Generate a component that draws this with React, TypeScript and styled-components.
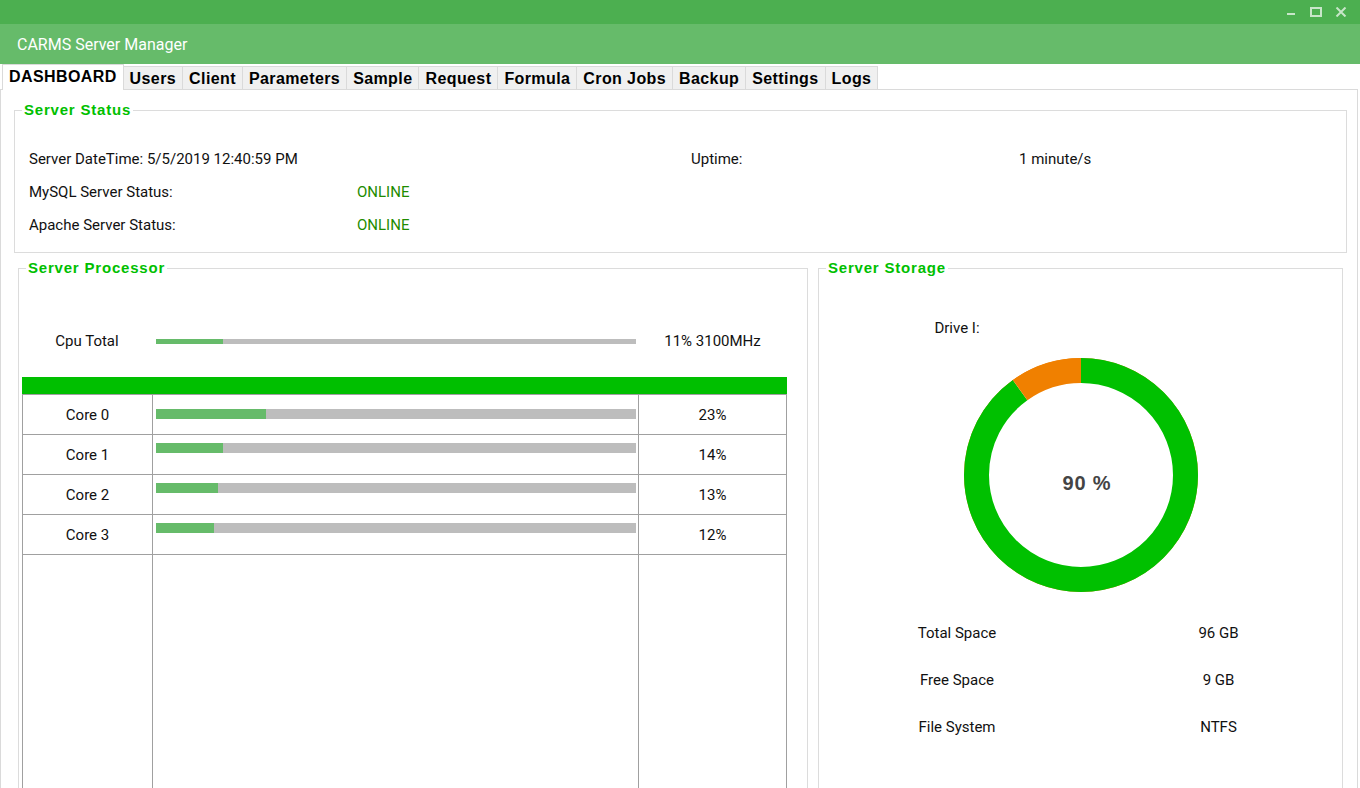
import styled, { createGlobalStyle } from 'styled-components';

const GlobalStyle = createGlobalStyle`
  html, body {
    margin: 0;
    padding: 0;
    background: #ffffff;
    overflow: hidden;
  }
  #root {
    width: 1360px;
    height: 788px;
    overflow: hidden;
  }
  * {
    box-sizing: border-box;
  }
`;

const Window = styled.div`
  width: 1360px;
  height: 830px;
  display: flex;
  flex-direction: column;
  background: #ffffff;
  font-family: Roboto, 'Liberation Sans', sans-serif;
  font-size: 15px;
  color: #111111;
`;

const TitleBar = styled.div`
  height: 24px;
  flex: 0 0 24px;
  background: #4caf50;
  display: flex;
  justify-content: flex-end;
  align-items: center;
  padding-right: 7px;
`;

const WindowButton = styled.span`
  width: 25px;
  height: 24px;
  display: flex;
  align-items: center;
  justify-content: center;
`;

const Header = styled.div`
  height: 40px;
  flex: 0 0 40px;
  background: #66bb6a;
  color: #ffffff;
  font-size: 16px;
  display: flex;
  align-items: center;
  padding-left: 17px;
`;

const TabStrip = styled.div`
  height: 26px;
  flex: 0 0 26px;
  display: flex;
  align-items: flex-end;
  padding-left: 2px;
  margin-bottom: -1px;
  position: relative;
  z-index: 1;
`;

const Tab = styled.div<{ $active?: boolean }>`
  height: ${({ $active }) => ($active ? '26px' : '24px')};
  padding: ${({ $active }) => ($active ? '0 6px 2px' : '1px 6px 0')};
  margin-left: -1px;
  display: flex;
  align-items: center;
  background: ${({ $active }) => ($active ? '#ffffff' : '#f0f0f0')};
  border: 1px solid #dadada;
  border-bottom: ${({ $active }) => ($active ? 'none' : '1px solid #dadada')};
  font-family: 'Liberation Sans', Arial, sans-serif;
  font-weight: bold;
  font-size: 16px;
  letter-spacing: 0.4px;
  color: #000000;
  position: relative;
  z-index: ${({ $active }) => ($active ? 2 : 1)};
  &:first-child {
    margin-left: 0;
  }
`;

const TabPanel = styled.div`
  flex: 1;
  margin-right: 2px;
  border: 1px solid #dadada;
  display: flex;
  flex-direction: column;
  padding: 11px 10px 0 13px;
  overflow: hidden;
`;

const GroupBox = styled.fieldset`
  margin: 0;
  padding: 0;
  min-width: 0;
  border: 1px solid #dcdcdc;
`;

const GroupTitle = styled.legend`
  margin-left: 7px;
  padding: 0 2px;
  font-family: 'Liberation Sans', Arial, sans-serif;
  font-weight: bold;
  font-size: 15px;
  line-height: 18px;
  letter-spacing: 0.8px;
  color: #00c000;
`;

const StatusGrid = styled.div`
  display: grid;
  grid-template-columns: 328px 334px 328px 1fr;
  grid-auto-rows: 33px;
  align-items: center;
  padding: 23px 0 11px 14px;
  white-space: nowrap;
`;

const Online = styled.span`
  color: #1e8c00;
`;

const LowerRow = styled.div`
  flex: 1;
  display: flex;
  gap: 10px;
  margin: 6px 4px 0 4px;
`;

const ProcessorBox = styled(GroupBox)`
  flex: 0 0 790px;
  display: flex;
  flex-direction: column;
`;

const StorageBox = styled(GroupBox)`
  flex: 1;
`;

const ProcessorBody = styled.div`
  height: 100%;
  display: flex;
  flex-direction: column;
  padding: 0 20px 0 3px;
`;

const CpuRow = styled.div`
  display: grid;
  grid-template-columns: 130px 486px 1fr;
  height: 40px;
  margin-top: 44px;
  align-items: center;
  text-align: center;
`;

const CpuBar = styled.div`
  padding: 0 2px 0 4px;
`;

const Track = styled.div<{ $height: number }>`
  height: ${({ $height }) => $height}px;
  background: #bdbdbd;
  display: flex;
`;

const Fill = styled.div`
  height: 100%;
  background: #66bb6a;
`;

const CoreTable = styled.div`
  flex: 1;
  margin-top: 16px;
  display: flex;
  flex-direction: column;
  border-left: 1px solid #a0a0a0;
  border-right: 1px solid #a0a0a0;
`;

const TableHead = styled.div`
  height: 18px;
  margin: 0 -1px;
  background: #00bf00;
  border-bottom: 1px solid #a0a0a0;
`;

const CoreRow = styled.div`
  display: grid;
  grid-template-columns: 130px 486px 1fr;
  height: 40px;
  border-bottom: 1px solid #a0a0a0;
`;

const FillerRow = styled.div`
  flex: 1;
  display: grid;
  grid-template-columns: 130px 486px 1fr;
`;

const Cell = styled.div`
  border-right: 1px solid #a0a0a0;
  display: flex;
  align-items: center;
  justify-content: center;
  &:last-child {
    border-right: none;
  }
`;

const BarCell = styled.div<{ $top: number }>`
  border-right: 1px solid #a0a0a0;
  padding: ${({ $top }) => $top}px 2px 0 3px;
`;

const StorageBody = styled.div`
  display: flex;
  flex-direction: column;
`;

const InfoGrid = styled.div<{ $top: number }>`
  display: grid;
  grid-template-columns: 276px 1fr;
  row-gap: 27px;
  line-height: 20px;
  text-align: center;
  margin-top: ${({ $top }) => $top}px;
`;

const Donut = styled.svg`
  display: block;
  margin: 19px auto 0;
`;

const DonutLabel = styled.text`
  font-family: 'Liberation Sans', Arial, sans-serif;
  font-weight: bold;
  font-size: 20px;
  letter-spacing: 0.8px;
  fill: #444444;
`;

const Minimize = () => (
  <svg width="10" height="10" viewBox="0 0 10 10">
    <rect x="1" y="6" width="8" height="2" fill="#c8e6c9" />
  </svg>
);

const Maximize = () => (
  <svg width="12" height="10" viewBox="0 0 12 10">
    <rect x="1" y="1" width="10" height="8" fill="none" stroke="#c8e6c9" strokeWidth="2" />
  </svg>
);

const Close = () => (
  <svg width="12" height="10" viewBox="0 0 12 10">
    <path d="M1.5 0.5 L10.5 9.5 M10.5 0.5 L1.5 9.5" stroke="#c8e6c9" strokeWidth="2" />
  </svg>
);

const tabs = ['DASHBOARD', 'Users', 'Client', 'Parameters', 'Sample', 'Request', 'Formula', 'Cron Jobs', 'Backup', 'Settings', 'Logs'];

const cores = [
  { name: 'Core 0', pct: 23, top: 14 },
  { name: 'Core 1', pct: 14, top: 8 },
  { name: 'Core 2', pct: 13, top: 8 },
  { name: 'Core 3', pct: 12, top: 8 },
];

const stats = [
  ['Total Space', '96 GB'],
  ['Free Space', '9 GB'],
  ['File System', 'NTFS'],
];

const UsageRing = ({ used }: { used: number }) => {
  const r = 104.5;
  const c = 2 * Math.PI * r;
  const usedLen = (used / 100) * c;
  return (
    <Donut width="236" height="236" viewBox="0 0 236 236">
      <circle cx="118" cy="118" r="116.5" fill="none" stroke="#f08000" strokeWidth="1" />
      <g transform="rotate(-90 118 118)">
        <circle
          cx="118"
          cy="118"
          r={r}
          fill="none"
          stroke="#00c000"
          strokeWidth="25"
          strokeDasharray={`${usedLen} ${c}`}
        />
        <circle
          cx="118"
          cy="118"
          r={r}
          fill="none"
          stroke="#f08000"
          strokeWidth="25"
          strokeDasharray={`${c - usedLen} ${c}`}
          strokeDashoffset={-usedLen}
        />
      </g>
      <DonutLabel x="124" y="133" textAnchor="middle">
        {used} %
      </DonutLabel>
    </Donut>
  );
};

export default function App() {
  return (
    <>
      <GlobalStyle />
      <Window>
        <TitleBar>
          <WindowButton><Minimize /></WindowButton>
          <WindowButton><Maximize /></WindowButton>
          <WindowButton><Close /></WindowButton>
        </TitleBar>
        <Header>CARMS Server Manager</Header>
        <TabStrip>
          {tabs.map((t, i) => (
            <Tab key={t} $active={i === 0}>{t}</Tab>
          ))}
        </TabStrip>
        <TabPanel>
          <GroupBox>
            <GroupTitle>Server Status</GroupTitle>
            <StatusGrid>
              <span style={{ gridColumn: '1 / 3' }}>Server DateTime: 5/5/2019 12:40:59 PM</span>
              <span>Uptime:</span>
              <span>1 minute/s</span>
              <span>MySQL Server Status:</span>
              <Online>ONLINE</Online>
              <span />
              <span />
              <span>Apache Server Status:</span>
              <Online>ONLINE</Online>
            </StatusGrid>
          </GroupBox>
          <LowerRow>
            <ProcessorBox>
              <GroupTitle>Server Processor</GroupTitle>
              <ProcessorBody>
                <CpuRow>
                  <span>Cpu Total</span>
                  <CpuBar>
                    <Track $height={5}>
                      <Fill style={{ width: '14%' }} />
                    </Track>
                  </CpuBar>
                  <span>11% 3100MHz</span>
                </CpuRow>
                <CoreTable>
                  <TableHead />
                  {cores.map((c) => (
                    <CoreRow key={c.name}>
                      <Cell>{c.name}</Cell>
                      <BarCell $top={c.top}>
                        <Track $height={10}>
                          <Fill style={{ width: `${c.pct}%` }} />
                        </Track>
                      </BarCell>
                      <Cell>{c.pct}%</Cell>
                    </CoreRow>
                  ))}
                  <FillerRow>
                    <Cell />
                    <Cell />
                    <Cell />
                  </FillerRow>
                </CoreTable>
              </ProcessorBody>
            </ProcessorBox>
            <StorageBox>
              <GroupTitle>Server Storage</GroupTitle>
              <StorageBody>
                <InfoGrid $top={41}>
                  <span>Drive I:</span>
                </InfoGrid>
                <UsageRing used={90} />
                <InfoGrid $top={30}>
                  {stats.flatMap(([k, v]) => [
                    <span key={k}>{k}</span>,
                    <span key={v}>{v}</span>,
                  ])}
                </InfoGrid>
              </StorageBody>
            </StorageBox>
          </LowerRow>
        </TabPanel>
      </Window>
    </>
  );
}
